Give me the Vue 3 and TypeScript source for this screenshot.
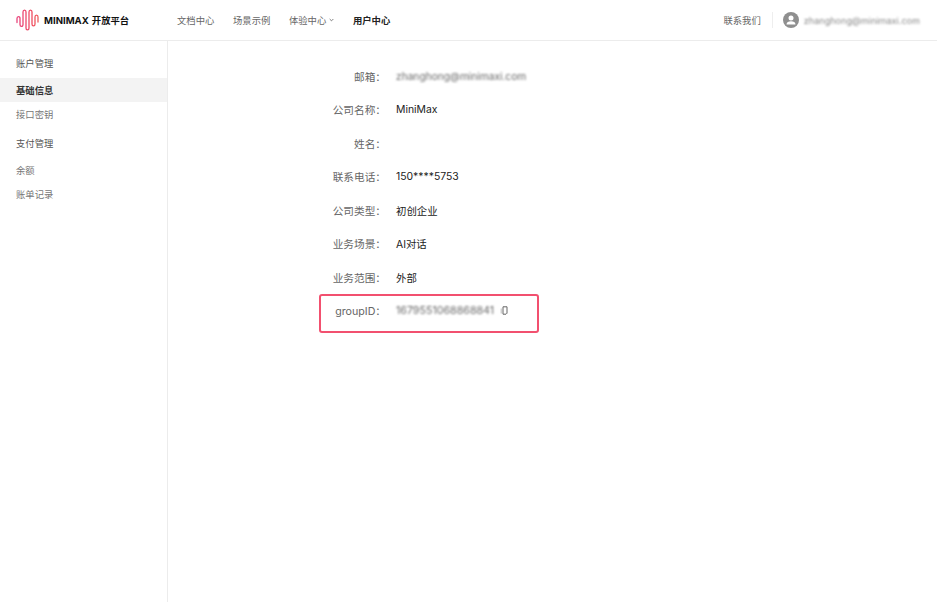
<script setup lang="ts">
interface Field {
  label: string;
  value: string;
  blurred?: boolean;
}

const navItems = ["文档中心", "场景示例", "体验中心", "用户中心"];

const fields: Field[] = [
  { label: "邮箱", value: "zhanghong@minimaxi.com", blurred: true },
  { label: "公司名称", value: "MiniMax" },
  { label: "姓名", value: "" },
  { label: "联系电话", value: "150****5753" },
  { label: "公司类型", value: "初创企业" },
  { label: "业务场景", value: "AI对话" },
  { label: "业务范围", value: "外部" },
];
</script>

<template>
  <div class="page">
    <header class="topbar">
      <div class="logo">
        <svg width="26" height="22" viewBox="0 0 26 22" fill="none">
          <defs>
            <linearGradient id="wave" x1="0" y1="0" x2="26" y2="0" gradientUnits="userSpaceOnUse">
              <stop offset="0" stop-color="#e8447f" />
              <stop offset="0.6" stop-color="#ef4a5f" />
              <stop offset="1" stop-color="#ee6a5c" />
            </linearGradient>
          </defs>
          <path
            d="M1 13.500V9.500c0-2.600 3-2.600 3 0v6c0 2.600 3 2.600 3 0V3c0-2.600 3-2.600 3 0v16c0 2.600 3 2.600 3 0V3c0-2.600 3-2.600 3 0v12c0 2.600 3 2.600 3 0V8c0-2.600 3-2.600 3 0v5"
            stroke="url(#wave)"
            stroke-width="1.300"
            stroke-linecap="round"
          />
        </svg>
        <span class="logo-word">MINIMAX</span>
        <span class="logo-cn">开放平台</span>
      </div>
      <nav class="nav">
        <a v-for="item in navItems" :key="item" class="nav-item" :class="{ active: item === '用户中心' }">
          {{ item }}
          <svg v-if="item === '体验中心'" width="5" height="4" viewBox="0 0 6 4" fill="none">
            <path d="M.8.8 3 3l2.200-2.200" stroke="#555" stroke-width=".9" />
          </svg>
        </a>
      </nav>
      <div class="account">
        <span class="contact">联系我们</span>
        <span class="divider"></span>
        <svg class="avatar" width="16" height="16" viewBox="0 0 16 16">
          <circle cx="8" cy="8" r="8" fill="#8f8f8f" />
          <circle cx="8" cy="6" r="2.500" fill="#fff" />
          <path d="M3.500 12.500c0-2.200 2-3.200 4.500-3.200s4.500 1 4.500 3.200z" fill="#fff" />
        </svg>
        <span class="account-mail">zhanghong@minimaxi.com</span>
      </div>
    </header>

    <div class="body">
      <aside class="sidebar">
        <div class="side-title">账户管理</div>
        <div class="side-item current">基础信息</div>
        <div class="side-item">接口密钥</div>
        <div class="side-title second">支付管理</div>
        <div class="side-item">余额</div>
        <div class="side-item">账单记录</div>
      </aside>

      <main class="content">
        <dl class="form">
          <div v-for="field in fields" :key="field.label" class="row">
            <dt>{{ field.label }}：</dt>
            <dd :class="{ blurred: field.blurred }">{{ field.value }}</dd>
          </div>
          <div class="row highlighted">
            <dt>groupID：</dt>
            <dd>
              <span class="blurred">1679551068868841</span>
              <svg class="copy" width="8" height="9" viewBox="0 0 8 9" fill="none">
                <path d="M3 .8h4v6.400l-1 1H3z" stroke="#666" stroke-width="1" stroke-linejoin="round" />
                <path d="M1.200 2.500v5" stroke="#aaa" stroke-width=".8" />
              </svg>
            </dd>
          </div>
        </dl>
      </main>
    </div>
  </div>
</template>

<style>
html,
body {
  margin: 0;
  background: #fff;
}
</style>

<style scoped>
.page {
  display: flex;
  flex-direction: column;
  width: 937px;
  height: 602px;
  overflow: hidden;
  font-family: Inter, "Noto Sans CJK SC", sans-serif;
  color: #222;
}

.topbar {
  display: flex;
  flex: none;
  align-items: center;
  box-sizing: border-box;
  height: 41px;
  padding: 0 17px 0 16px;
  border-bottom: 1px solid #ececec;
}

.logo {
  display: flex;
  flex: none;
  align-items: center;
  width: 161px;
}

.logo-word {
  margin-left: 2px;
  font-size: 9.6px;
  font-weight: 700;
  color: #111;
}

.logo-cn {
  margin-left: 3px;
  font-size: 9.33px;
  font-weight: 700;
  color: #111;
}

.nav {
  display: flex;
  gap: 18.67px;
  font-size: 9.33px;
  color: #666;
}

.nav-item {
  display: flex;
  align-items: center;
  gap: 3px;
}

.nav-item.active {
  font-weight: 700;
  color: #222;
}

.account {
  display: flex;
  align-items: center;
  margin-left: auto;
  font-size: 9.33px;
  color: #666;
}

.divider {
  width: 1px;
  height: 16px;
  margin: 0 10px 0 11px;
  background: #eee;
}

.account-mail {
  margin-left: 5px;
  font-size: 9.1px;
  color: #888;
  filter: blur(1.1px);
}

.body {
  display: flex;
  flex: 1;
}

.sidebar {
  flex: none;
  box-sizing: border-box;
  width: 168px;
  padding-top: 11px;
  border-right: 1px solid #ececec;
  font-size: 9.33px;
}

.side-title,
.side-item {
  height: 24px;
  padding-left: 16px;
  line-height: 24px;
}

.side-title {
  margin-bottom: 2px;
  color: #555;
}

.side-title.second {
  margin-top: 6px;
}

.side-item {
  color: #777;
  line-height: 25px;
}

.side-item.current {
  background: #f3f3f3;
  font-weight: 700;
  color: #333;
}

.content {
  flex: 1;
  padding-top: 18.4px;
}

.form {
  margin: 0;
  font-size: 10.67px;
}

.row {
  display: flex;
  align-items: center;
  height: 33.5px;
}

.row dt {
  width: 218px;
  margin-right: 10px;
  color: #666;
  text-align: right;
}

.row dd {
  margin: 0;
  font-size: 10.4px;
  color: #222;
}

.row dd.blurred,
.row .blurred {
  color: #666;
  filter: blur(1px);
}

.row .blurred {
  font-size: 10.67px;
}

.row dd.blurred {
  font-size: 10.2px;
}

.highlighted {
  position: relative;
}

.highlighted::after {
  content: "";
  position: absolute;
  top: 0;
  left: 151px;
  width: 216px;
  height: 35px;
  border: 2px solid #f2506f;
  border-radius: 3px;
}

.highlighted dd {
  display: flex;
  align-items: center;
  gap: 6px;
}
</style>
